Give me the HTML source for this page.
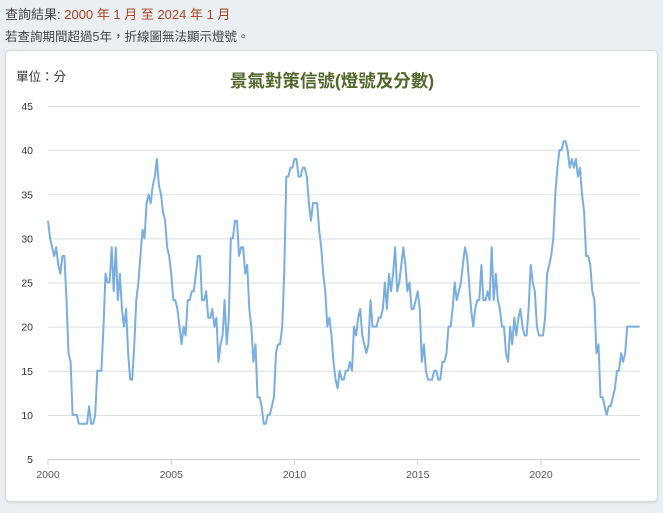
<!DOCTYPE html>
<html><head><meta charset="utf-8"><style>
body{margin:0;width:663px;height:513px;background:#e9eff3;font-family:"Liberation Sans","Noto Sans CJK TC",sans-serif;overflow:hidden;position:relative}
.l1{position:absolute;left:5px;top:4px;font-size:13px;color:#444}
.l1 span{color:#a9431e}
.l2{position:absolute;left:5px;top:26px;font-size:12.5px;color:#444}
.card{position:absolute;left:5px;top:50px;width:651px;height:450px;background:#fff;border:1px solid #d4d9dc;border-radius:5px;box-shadow:0 1px 2px rgba(0,0,0,.1)}
</style></head><body>
<div class="l1">查詢結果: <span>2000 年 1 月 至 2024 年 1 月</span></div>
<div class="l2">若查詢期間超過5年，折線圖無法顯示燈號。</div>
<div class="card"></div>
<svg width="663" height="513" style="position:absolute;left:0;top:0" font-family="Liberation Sans, sans-serif">
<text x="16" y="81" font-size="12.5" fill="#333" font-family="Liberation Sans, Noto Sans CJK TC, sans-serif">單位：分</text>
<text x="332" y="87" font-size="17.5" font-weight="600" fill="#52682a" text-anchor="middle" font-family="Liberation Sans, Noto Sans CJK TC, sans-serif">景氣對策信號(燈號及分數)</text>
<g id="grid" stroke="#d8dde0" stroke-width="1"></g>
<g id="yl" font-size="10.5" fill="#333" text-anchor="end"></g>
<g id="xl" font-size="10.5" fill="#555" text-anchor="middle"></g>
<polyline id="pl" fill="none" stroke="#7aaede" stroke-width="2" stroke-linejoin="round"/>
</svg>
<script>
var d=[32,30,29,28,29,27,26,28,28,23,17,16,
10,10,10,9,9,9,9,9,11,9,9,10,
15,15,15,20,26,25,25,29,24,29,23,26,
22,20,22,17,14,14,18,23,25,28,31,30,
34,35,34,36,37,39,36,35,33,32,29,28,
26,23,23,22,20,18,20,19,23,23,24,24,
26,28,28,23,23,24,21,21,22,20,21,16,
18,19,23,18,21,30,30,32,32,28,29,29,
26,27,22,20,16,18,12,12,11,9,9,10,
10,11,12,17,18,18,20,26,37,37,38,38,
39,39,37,37,38,38,37,34,32,34,34,34,
31,29,26,24,20,21,19,16,14,13,15,14,
14,15,15,16,15,20,19,21,22,19,18,17,
18,23,20,20,20,21,21,22,25,22,26,24,
26,29,24,25,27,29,27,24,25,22,22,23,
24,22,16,18,15,14,14,14,15,15,14,14,
16,16,17,20,20,22,25,23,24,25,27,29,
28,25,22,20,22,23,23,27,23,23,24,23,
29,23,26,23,22,20,20,17,16,20,18,21,
19,21,22,20,19,19,22,27,25,24,20,19,
19,19,21,26,27,28,30,35,38,40,40,41,
41,40,38,39,38,39,37,38,35,33,28,28,
27,24,23,17,18,12,12,11,10,11,11,12,
13,15,15,17,16,17,20,20,20,20,20,20,20];
function Y(v){return 459-(v-5)*8.825}
var pts=d.map(function(v,i){return (48+i*2.054).toFixed(1)+","+Y(v).toFixed(1)}).join(" ");
document.getElementById("pl").setAttribute("points",pts);
var ns="http://www.w3.org/2000/svg",g=document.getElementById("grid"),yl=document.getElementById("yl"),xl=document.getElementById("xl");
for(var v=5;v<=45;v+=5){var l=document.createElementNS(ns,"line");l.setAttribute("x1",48);l.setAttribute("x2",640);l.setAttribute("y1",Y(v)+.5);l.setAttribute("y2",Y(v)+.5);if(v==5)l.setAttribute("stroke","#c8ced2");g.appendChild(l);
var t=document.createElementNS(ns,"text");t.setAttribute("x",33);t.setAttribute("y",Y(v)+4);t.textContent=v;yl.appendChild(t);}
for(var k=0;k<5;k++){var x=48+k*5*24.65;var l=document.createElementNS(ns,"line");l.setAttribute("x1",x);l.setAttribute("x2",x);l.setAttribute("y1",459);l.setAttribute("y2",465);l.setAttribute("stroke","#c8ced2");g.appendChild(l);
var t=document.createElementNS(ns,"text");t.setAttribute("x",x);t.setAttribute("y",478);t.textContent=2000+k*5;xl.appendChild(t);}
</script>
</body></html>
